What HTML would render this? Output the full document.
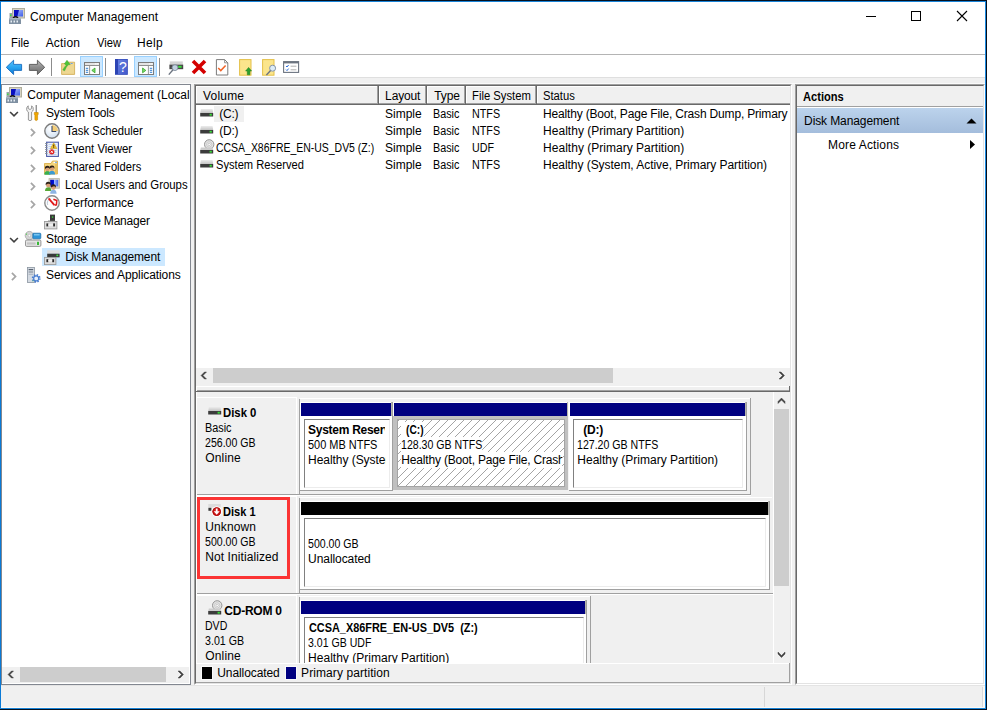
<!DOCTYPE html>
<html><head><meta charset="utf-8"><title>Computer Management</title>
<style>
html,body{margin:0;padding:0;}
body{width:987px;height:710px;overflow:hidden;background:#fff;position:relative;font-family:"Liberation Sans", sans-serif;font-size:12px;color:#000;}
body div, body span.t, body svg{position:absolute;}
.t{white-space:pre;line-height:16px;height:16px;}
</style></head><body>
<div style="left:0px;top:0px;width:987px;height:710px;background:#fff;"></div>
<div style="left:1px;top:54px;width:984px;height:1px;background:#b4b4b4;"></div>
<div style="left:1px;top:77px;width:984px;height:1px;background:#dfdfdf;"></div>
<div style="left:1px;top:78px;width:984px;height:630px;background:#f0f0f0;"></div>
<div style="left:1px;top:83px;width:984px;height:1px;background:#fafafa;"></div>
<svg style="left:9px;top:8px;overflow:visible" width="16" height="16" viewBox="0 0 16 16"><defs><linearGradient id="scr" x1="0" y1="0" x2="1" y2="0"><stop offset="0" stop-color="#0000b4"/><stop offset=".45" stop-color="#0018d8"/><stop offset=".5" stop-color="#a8bcff"/><stop offset="1" stop-color="#3c5ce8"/></linearGradient><linearGradient id="scr2" x1="0" y1="0" x2="1" y2="1"><stop offset="0" stop-color="#b8c8ff"/><stop offset="1" stop-color="#3c5ce8"/></linearGradient></defs>
<rect x="3.5" y="0.5" width="12" height="9.5" fill="#d6d3c4" stroke="#b0ae9c"/>
<rect x="5" y="2" width="9" height="6.5" fill="url(#scr2)"/><path d="M5 2 H10 L8.4 8.5 H5 Z" fill="#0a10c0"/>
<rect x="0.5" y="5" width="2.5" height="5" fill="#9aa3ab"/><rect x="1" y="6.5" width="1.5" height="1.5" fill="#3ce03c"/>
<path d="M4 10 Q6.5 7.5 9 10" stroke="#101018" stroke-width="1.4" fill="none"/>
<rect x="0" y="10" width="12" height="6" fill="#7f90a2"/><rect x="0" y="10" width="12" height="1.5" fill="#aab6c2"/>
<rect x="1.5" y="12.5" width="1.5" height="2" fill="#e8eef4"/><rect x="4.5" y="12.5" width="1.5" height="2" fill="#e8eef4"/><rect x="7.5" y="12.5" width="1.5" height="2" fill="#e8eef4"/></svg>
<span class="t" style="left:30.1px;top:9px;letter-spacing:0.106px;">Computer Management</span>
<div style="left:866px;top:16px;width:10px;height:1px;background:#000;"></div>
<div style="left:911px;top:11px;width:10px;height:10px;border:1px solid #000;box-sizing:border-box;"></div>
<svg style="left:956px;top:10px" width="12" height="12" viewBox="0 0 12 12"><path d="M1 1 L11 11 M11 1 L1 11" stroke="#000" stroke-width="1.1" fill="none"/></svg>
<span class="t" style="left:11.16px;top:35px;transform:scaleX(0.9389);transform-origin:0 0;">File</span>
<span class="t" style="left:45.7px;top:35px;letter-spacing:0.18px;">Action</span>
<span class="t" style="left:96.7px;top:35px;transform:scaleX(0.9346);transform-origin:0 0;">View</span>
<span class="t" style="left:137.1px;top:35px;letter-spacing:0.3px;">Help</span>
<svg style="left:5px;top:58px;overflow:visible" width="18" height="18" viewBox="0 0 18 18"><defs><linearGradient id="ba" x1="0" y1="0" x2="0" y2="1"><stop offset="0" stop-color="#58c4fc"/><stop offset=".5" stop-color="#2aa4f0"/><stop offset="1" stop-color="#0c78d4"/></linearGradient>
<linearGradient id="fa" x1="0" y1="0" x2="0" y2="1"><stop offset="0" stop-color="#b8b8b8"/><stop offset=".5" stop-color="#8c8c8c"/><stop offset="1" stop-color="#6c6c6c"/></linearGradient></defs>
<path d="M1.3 9.3 L8.6 2.2 V6.4 H16.6 V12.4 H8.6 V16.5 Z" fill="url(#ba)" stroke="#1a6cc0" stroke-width="0.9"/></svg>
<svg style="left:28px;top:58px;overflow:visible" width="18" height="18" viewBox="0 0 18 18"><path d="M16.7 9.3 L9.4 2.2 V6.4 H1.4 V12.4 H9.4 V16.5 Z" fill="url(#fa)" stroke="#555" stroke-width="0.9"/></svg>
<div style="left:51px;top:58px;width:1px;height:18px;background:#8c8c8c;"></div>
<svg style="left:60px;top:58px;overflow:visible" width="16" height="18" viewBox="0 0 16 18"><path d="M1.6 5.6 H6.4 L7.6 4.2 H14.6 V16.4 H1.6 Z" fill="#eed792" stroke="#cfa84c" stroke-width="0.8"/>
<path d="M2.8 12 Q4.4 8.6 6.2 7.2 L4.4 5.8 L7 2.2 L10.2 6.6 L8.2 6.8 Q6 9 4.6 12.8 Z" fill="#4cc436" stroke="#2f9a20" stroke-width="0.4"/><rect x="10.6" y="5" width="2" height="1" fill="#6aa0e8"/></svg>
<div style="left:80px;top:56px;width:23px;height:21px;background:#cce8ff;border:1px solid #99d1ff;box-sizing:border-box;"></div>
<svg style="left:84px;top:62px;overflow:visible" width="16" height="13" viewBox="0 0 16 13"><rect x="0.5" y="0.5" width="15" height="12" fill="#fdfdfd" stroke="#7c7c7c" stroke-width="1"/>
<rect x="1" y="1" width="14" height="2" fill="#e4e4e4"/><rect x="11.2" y="1.2" width="1.3" height="1.3" fill="#fff"/><rect x="13.2" y="1.2" width="1.3" height="1.3" fill="#fff"/>
<rect x="1" y="3" width="14" height="1" fill="#909090"/><rect x="5.2" y="4" width="0.9" height="8" fill="#909090"/><path d="M1.8 6.3H4.2M1.8 8.3H4.2M1.8 10.3H4.2" stroke="#2c7cd0" stroke-width="1"/><path d="M11 6 V10.8 L7.8 8.4 Z" fill="#7fd86c" stroke="#34a828" stroke-width="0.8"/></svg>
<div style="left:105px;top:58px;width:1px;height:18px;background:#8c8c8c;"></div>
<svg style="left:115px;top:59px;overflow:visible" width="14" height="16" viewBox="0 0 14 16"><defs><linearGradient id="hp" x1="0" y1="0" x2="1" y2="1"><stop offset="0" stop-color="#6880e0"/><stop offset="1" stop-color="#4058cc"/></linearGradient></defs>
<rect x="0" y="0" width="12.8" height="15.8" fill="#2c44b4"/><rect x="3" y="0.6" width="9.2" height="14.6" fill="url(#hp)"/>
<text x="7.8" y="12.8" font-family="Liberation Sans, sans-serif" font-size="14" fill="#fff" text-anchor="middle">?</text></svg>
<div style="left:134px;top:56px;width:23px;height:21px;background:#cce8ff;border:1px solid #99d1ff;box-sizing:border-box;"></div>
<svg style="left:138px;top:62px;overflow:visible" width="16" height="13" viewBox="0 0 16 13"><rect x="0.5" y="0.5" width="15" height="12" fill="#fdfdfd" stroke="#7c7c7c" stroke-width="1"/>
<rect x="1" y="1" width="14" height="2" fill="#e4e4e4"/><rect x="11.2" y="1.2" width="1.3" height="1.3" fill="#fff"/><rect x="13.2" y="1.2" width="1.3" height="1.3" fill="#fff"/>
<rect x="1" y="3" width="14" height="1" fill="#909090"/><rect x="9.9" y="4" width="0.9" height="8" fill="#909090"/><path d="M11.8 6.3H14.2M11.8 8.3H14.2M11.8 10.3H14.2" stroke="#2c7cd0" stroke-width="1"/><path d="M4.6 6 V10.8 L7.8 8.4 Z" fill="#7fd86c" stroke="#34a828" stroke-width="0.8"/></svg>
<div style="left:159px;top:58px;width:1px;height:18px;background:#8c8c8c;"></div>
<svg style="left:167px;top:60px;overflow:visible" width="17" height="16" viewBox="0 0 17 16"><rect x="2.8" y="1.4" width="13" height="3.2" fill="#d4d4d4"/><rect x="2.4" y="4.6" width="13.8" height="4.6" fill="#484848"/><rect x="11.2" y="5.8" width="3.4" height="2" fill="#38e038"/>
<circle cx="8" cy="7.6" r="2.9" fill="#cfe0f2" fill-opacity=".9" stroke="#8490a0" stroke-width="1"/><path d="M6 9.8 L1.8 14.6" stroke="#6c7480" stroke-width="1.4"/></svg>
<svg style="left:191px;top:59px;overflow:visible" width="16" height="16" viewBox="0 0 16 16"><path d="M2 2 L14 14 M14 2 L2 14" stroke="#d40000" stroke-width="3.6" stroke-linecap="butt"/></svg>
<svg style="left:215px;top:59px;overflow:visible" width="14" height="17" viewBox="0 0 14 17"><path d="M1.4 0.6 H9.6 L12.8 3.8 V16 H1.4 Z" fill="#fff" stroke="#7c7c7c" stroke-width="1"/><path d="M9.6 0.6 V3.8 H12.8" fill="none" stroke="#7c7c7c" stroke-width="0.8"/>
<path d="M3.2 9 L5.8 11.6 L10.6 6.4" stroke="#f06428" stroke-width="1.5" fill="none"/></svg>
<svg style="left:239px;top:59px;overflow:visible" width="15" height="17" viewBox="0 0 15 17"><rect x="0.6" y="0.6" width="11.4" height="15.6" fill="#fbe58c" stroke="#e4c048" stroke-width="1"/>
<path d="M9.6 8.4 L12.6 12 H10.9 V15.8 H8.3 V12 H6.6 Z" fill="#2ca02c" stroke="#1c7c1c" stroke-width="0.5"/></svg>
<svg style="left:262px;top:59px;overflow:visible" width="16" height="17" viewBox="0 0 16 17"><rect x="0.6" y="0.6" width="11.4" height="15.6" fill="#fbe58c" stroke="#e4c048" stroke-width="1"/>
<circle cx="10.6" cy="9.2" r="3" fill="#dcecf8" stroke="#8494a8" stroke-width="1"/><path d="M8.6 11.6 L4.4 16" stroke="#6c7480" stroke-width="1.4"/></svg>
<svg style="left:283px;top:61px;overflow:visible" width="17" height="13" viewBox="0 0 17 13"><rect x="0.6" y="0.6" width="15" height="10.8" fill="#fff" stroke="#6c7480" stroke-width="1.1"/><rect x="1" y="1" width="14.6" height="1.4" fill="#6c7480"/>
<path d="M3 5 L4 6 L5.6 4 M3 8.6 L4 9.6 L5.6 7.6" stroke="#2c6cd8" stroke-width="1" fill="none"/><path d="M7.6 5.2 H13.4 M7.6 8.8 H13.4" stroke="#b0b0b0" stroke-width="1"/></svg>
<div style="left:1px;top:84px;width:190px;height:601px;background:#fff;border:1px solid #828790;box-sizing:border-box;"></div>
<svg style="left:6px;top:87px;overflow:visible" width="16" height="16" viewBox="0 0 16 16"><defs><linearGradient id="scr" x1="0" y1="0" x2="1" y2="0"><stop offset="0" stop-color="#0000b4"/><stop offset=".45" stop-color="#0018d8"/><stop offset=".5" stop-color="#a8bcff"/><stop offset="1" stop-color="#3c5ce8"/></linearGradient><linearGradient id="scr2" x1="0" y1="0" x2="1" y2="1"><stop offset="0" stop-color="#b8c8ff"/><stop offset="1" stop-color="#3c5ce8"/></linearGradient></defs>
<rect x="3.5" y="0.5" width="12" height="9.5" fill="#d6d3c4" stroke="#b0ae9c"/>
<rect x="5" y="2" width="9" height="6.5" fill="url(#scr2)"/><path d="M5 2 H10 L8.4 8.5 H5 Z" fill="#0a10c0"/>
<rect x="0.5" y="5" width="2.5" height="5" fill="#9aa3ab"/><rect x="1" y="6.5" width="1.5" height="1.5" fill="#3ce03c"/>
<path d="M4 10 Q6.5 7.5 9 10" stroke="#101018" stroke-width="1.4" fill="none"/>
<rect x="0" y="10" width="12" height="6" fill="#7f90a2"/><rect x="0" y="10" width="12" height="1.5" fill="#aab6c2"/>
<rect x="1.5" y="12.5" width="1.5" height="2" fill="#e8eef4"/><rect x="4.5" y="12.5" width="1.5" height="2" fill="#e8eef4"/><rect x="7.5" y="12.5" width="1.5" height="2" fill="#e8eef4"/></svg>
<span class="t" style="left:27.3px;top:87px;letter-spacing:0.012px;">Computer Management (Local</span>
<svg style="left:25px;top:105px;overflow:visible" width="16" height="16" viewBox="0 0 16 16"><path d="M3.2 0.8 L3.2 3.5 L5 4.5 L6.6 3.5 L6.6 0.8 Q8.6 2 8.3 4.6 Q8 6.2 6.6 7 L6.6 15 Q5 16.4 3.4 15 L3.4 7 Q1.8 6.2 1.6 4.4 Q1.5 2 3.2 0.8 Z" fill="#f2f2f2" stroke="#8c8c8c" stroke-width="0.9"/>
<rect x="10.6" y="0" width="1.3" height="8" fill="#8a8a8a"/>
<path d="M9.3 7.5 H13.2 V9.5 H12.6 V14.8 Q11.2 16.4 9.9 14.8 V9.5 H9.3 Z" fill="#f0a800" stroke="#c88400" stroke-width="0.6"/></svg>
<svg style="left:8.6px;top:110.6px;overflow:visible" width="10" height="7" viewBox="0 0 10 7"><path d="M1.1 1 L5 4.9 L8.9 1" stroke="#404040" stroke-width="1.6" fill="none"/></svg>
<span class="t" style="left:46.1px;top:105px;letter-spacing:-0.227px;">System Tools</span>
<svg style="left:44px;top:123px;overflow:visible" width="16" height="16" viewBox="0 0 16 16"><defs><radialGradient id="clk" cx=".4" cy=".35" r=".7"><stop offset="0" stop-color="#ffffff"/><stop offset="1" stop-color="#cfdff0"/></radialGradient></defs>
<circle cx="8" cy="8" r="7.2" fill="url(#clk)" stroke="#7c7c7c" stroke-width="1.4"/>
<path d="M8 8 L8 2 A6 6 0 0 1 14 8 Z" fill="#f2cc78"/>
<path d="M8 3 V8.5 H12.2" stroke="#3c4c6c" stroke-width="1.1" fill="none"/></svg>
<svg style="left:29.7px;top:127.9px;overflow:visible" width="7" height="10" viewBox="0 0 7 10"><path d="M0.9 0.9 L4.55 4.55 L0.9 8.2" stroke="#a6a6a6" stroke-width="1.7" fill="none"/></svg>
<span class="t" style="left:66.3px;top:123px;transform:scaleX(0.9354);transform-origin:0 0;">Task Scheduler</span>
<svg style="left:44px;top:141px;overflow:visible" width="16" height="16" viewBox="0 0 16 16"><rect x="2.6" y="1.2" width="11.8" height="14.2" fill="#eef3fc" stroke="#4c5caa" stroke-width="1.1"/>
<path d="M4.5 3.5H12.5M4.5 5.5H12.5M4.5 7.5H12.5M4.5 9.5H12.5M4.5 11.5H12.5M4.5 13.5H12.5" stroke="#b4c8ec" stroke-width="0.8"/>
<path d="M1.2 2.5H3.4M1.2 4.5H3.4M1.2 6.5H3.4M1.2 8.5H3.4M1.2 10.5H3.4M1.2 12.5H3.4" stroke="#808890" stroke-width="1"/>
<path d="M9.7 1.8 L12.9 7.6 H6.5 Z" fill="#f4c430" stroke="#c89600" stroke-width="0.5"/><rect x="9.3" y="3.6" width="0.9" height="2.2" fill="#302000"/><rect x="9.3" y="6.2" width="0.9" height="0.8" fill="#302000"/>
<circle cx="7.8" cy="10.8" r="2.6" fill="#e02020"/><path d="M6.7 9.7 L8.9 11.9 M8.9 9.7 L6.7 11.9" stroke="#fff" stroke-width="0.9"/></svg>
<svg style="left:29.7px;top:145.9px;overflow:visible" width="7" height="10" viewBox="0 0 7 10"><path d="M0.9 0.9 L4.55 4.55 L0.9 8.2" stroke="#a6a6a6" stroke-width="1.7" fill="none"/></svg>
<span class="t" style="left:65.35px;top:141px;transform:scaleX(0.9522);transform-origin:0 0;">Event Viewer</span>
<svg style="left:44px;top:160px;overflow:visible" width="16" height="16" viewBox="0 0 16 16"><path d="M0.5 3.5 H7 L8.5 1 H13.5 V14 H0.5 Z" fill="#f4d47c" stroke="#d8a840" stroke-width="0.8"/>
<rect x="9.5" y="1.8" width="3.2" height="1.3" fill="#ffffff"/><rect x="11.3" y="1.8" width="1.4" height="1.3" fill="#4a90e0"/>
<rect x="11" y="4" width="2.5" height="10" fill="#e8c060"/><g transform="translate(3.4,8.6) scale(0.95)"><path d="M-3.2 6.5 Q-3.2 2.6 0 2.6 Q3.2 2.6 3.2 6.5 Z" fill="#38b050"/><circle cx="0" cy="0.4" r="2.3" fill="#d8a078"/><path d="M-2.5 0.6 Q-3 -2.9 0 -2.9 Q3 -2.9 2.5 0.6 Q1.6 -1.2 -0.2 -0.8 Q-1.8 -0.6 -2.5 0.6Z" fill="#2c2018"/></g><g transform="translate(8,8.2) scale(0.95)"><path d="M-3.2 6.5 Q-3.2 2.6 0 2.6 Q3.2 2.6 3.2 6.5 Z" fill="#3c9ad0"/><circle cx="0" cy="0.4" r="2.3" fill="#d8a078"/><path d="M-2.5 0.6 Q-3 -2.9 0 -2.9 Q3 -2.9 2.5 0.6 Q1.6 -1.2 -0.2 -0.8 Q-1.8 -0.6 -2.5 0.6Z" fill="#2c2018"/></g></svg>
<svg style="left:29.7px;top:163.9px;overflow:visible" width="7" height="10" viewBox="0 0 7 10"><path d="M0.9 0.9 L4.55 4.55 L0.9 8.2" stroke="#a6a6a6" stroke-width="1.7" fill="none"/></svg>
<span class="t" style="left:65.37px;top:159px;transform:scaleX(0.9296);transform-origin:0 0;">Shared Folders</span>
<svg style="left:44px;top:178px;overflow:visible" width="16" height="16" viewBox="0 0 16 16"><rect x="5" y="0.6" width="10.4" height="9.6" fill="#d8d5c8" stroke="#b8b5a4" stroke-width="0.8"/>
<rect x="6.2" y="1.8" width="8" height="6.6" fill="url(#scr)"/><g transform="translate(4.2,6.6) scale(1.0)"><path d="M-3.2 6.5 Q-3.2 2.6 0 2.6 Q3.2 2.6 3.2 6.5 Z" fill="#58a838"/><circle cx="0" cy="0.4" r="2.3" fill="#d8a078"/><path d="M-2.5 0.6 Q-3 -2.9 0 -2.9 Q3 -2.9 2.5 0.6 Q1.6 -1.2 -0.2 -0.8 Q-1.8 -0.6 -2.5 0.6Z" fill="#2c2018"/></g><g transform="translate(9.4,9.2) scale(1.0)"><path d="M-3.2 6.5 Q-3.2 2.6 0 2.6 Q3.2 2.6 3.2 6.5 Z" fill="#8cb4e4"/><circle cx="0" cy="0.4" r="2.3" fill="#d8a078"/><path d="M-2.5 0.6 Q-3 -2.9 0 -2.9 Q3 -2.9 2.5 0.6 Q1.6 -1.2 -0.2 -0.8 Q-1.8 -0.6 -2.5 0.6Z" fill="#2c2018"/></g></svg>
<svg style="left:29.7px;top:181.9px;overflow:visible" width="7" height="10" viewBox="0 0 7 10"><path d="M0.9 0.9 L4.55 4.55 L0.9 8.2" stroke="#a6a6a6" stroke-width="1.7" fill="none"/></svg>
<span class="t" style="left:65.35px;top:177px;transform:scaleX(0.9477);transform-origin:0 0;">Local Users and Groups</span>
<svg style="left:44px;top:195px;overflow:visible" width="16" height="16" viewBox="0 0 16 16"><circle cx="8" cy="8" r="7.2" fill="#fdfdfd" stroke="#8a8a8a" stroke-width="1.4"/>
<path d="M3.6 9.5 A4.6 4.6 0 0 1 6.2 3.8" stroke="#7a96b4" stroke-width="1" fill="none" stroke-dasharray="1 1"/>
<path d="M4.6 3.4 L10.4 10.2" stroke="#e01818" stroke-width="1.8"/>
<path d="M9.4 4.2 L12.8 5.6 L12.4 9.8 L10.6 10.2" stroke="#e01818" stroke-width="1.5" fill="none"/></svg>
<svg style="left:29.7px;top:199.9px;overflow:visible" width="7" height="10" viewBox="0 0 7 10"><path d="M0.9 0.9 L4.55 4.55 L0.9 8.2" stroke="#a6a6a6" stroke-width="1.7" fill="none"/></svg>
<span class="t" style="left:65.3px;top:195px;letter-spacing:-0.03px;">Performance</span>
<svg style="left:44px;top:214px;overflow:visible" width="16" height="16" viewBox="0 0 16 16"><rect x="6" y="0.6" width="5" height="6.8" fill="#3a3a3a"/><rect x="7.9" y="2.4" width="1.3" height="1.3" fill="#40e040"/>
<rect x="4" y="6.6" width="7" height="1" fill="#6a6a6a"/>
<rect x="0.5" y="7.5" width="12.4" height="7.4" fill="#dcdcdc" stroke="#9a9a9a" stroke-width="0.9"/>
<rect x="2.4" y="9.4" width="1.9" height="3" fill="#2c2c2c"/><rect x="9.1" y="9.4" width="1.9" height="3" fill="#2c2c2c"/>
<rect x="4.3" y="10.3" width="4.8" height="1.4" fill="#f6f6f6"/></svg>
<span class="t" style="left:65.3px;top:213px;letter-spacing:-0.208px;">Device Manager</span>
<svg style="left:25px;top:231px;overflow:visible" width="16" height="16" viewBox="0 0 16 16"><circle cx="4.4" cy="4.6" r="4.2" fill="#d4d4d4" stroke="#9c9c9c" stroke-width="0.7"/><circle cx="4.4" cy="4.6" r="1.3" fill="#f8f8f8" stroke="#a8a8a8" stroke-width="0.5"/><rect x="1" y="2.6" width="1.1" height="1.1" fill="#40d040"/>
<rect x="7.8" y="2.2" width="8" height="5.6" rx="0.8" fill="#2c94d8" stroke="#1a6aa8" stroke-width="0.7"/><rect x="9" y="3.2" width="5.6" height="1.2" fill="#8cd0f4"/>
<rect x="0.5" y="9" width="15.4" height="6.4" rx="1.2" fill="#e4e4e4" stroke="#8c8c8c" stroke-width="0.9"/>
<rect x="2" y="11.4" width="8.6" height="2.2" fill="#c4c4c4"/><rect x="12" y="10.8" width="2" height="3.2" fill="#38b838"/></svg>
<svg style="left:8.6px;top:236.6px;overflow:visible" width="10" height="7" viewBox="0 0 10 7"><path d="M1.1 1 L5 4.9 L8.9 1" stroke="#404040" stroke-width="1.6" fill="none"/></svg>
<span class="t" style="left:46.1px;top:231px;letter-spacing:-0.183px;">Storage</span>
<div style="left:42px;top:248px;width:123px;height:18px;background:#cce8ff;"></div>
<svg style="left:44px;top:250px;overflow:visible" width="16" height="16" viewBox="0 0 16 16"><rect x="3.2" y="0.3" width="12.4" height="3.4" fill="#dedede"/><rect x="3.2" y="3.7" width="12.4" height="3.6" fill="#383838"/><rect x="12.4" y="4.6" width="1.8" height="1.6" fill="#40e040"/>
<rect x="0.5" y="7.4" width="11.4" height="7.2" fill="#dcdcdc" stroke="#9a9a9a" stroke-width="0.9"/>
<rect x="2.4" y="9.2" width="1.9" height="3" fill="#2c2c2c"/><rect x="8.2" y="9.2" width="1.9" height="3" fill="#2c2c2c"/><rect x="4.3" y="10.1" width="3.9" height="1.3" fill="#f6f6f6"/></svg>
<span class="t" style="left:65.3px;top:249px;letter-spacing:-0.121px;">Disk Management</span>
<svg style="left:25px;top:267px;overflow:visible" width="16" height="16" viewBox="0 0 16 16"><rect x="2.4" y="0.5" width="7" height="15" fill="#d4dae2" stroke="#8a94a0" stroke-width="0.8"/>
<rect x="3.6" y="2" width="4.6" height="1.2" fill="#5a6472"/><rect x="3.6" y="4.4" width="4.6" height="1.2" fill="#8a94a0"/><rect x="3.6" y="6.8" width="4.6" height="1" fill="#aab2be"/><rect x="7.4" y="13" width="1.2" height="1.2" fill="#40d040"/>
<circle cx="11.2" cy="11.4" r="3.3" fill="none" stroke="#4a7ed0" stroke-width="2.2" stroke-dasharray="1.3 1.3"/><circle cx="11.2" cy="11.4" r="2.5" fill="#e8f0fc" stroke="#4a7ed0" stroke-width="1.2"/></svg>
<svg style="left:10.9px;top:271.9px;overflow:visible" width="7" height="10" viewBox="0 0 7 10"><path d="M0.9 0.9 L4.55 4.55 L0.9 8.2" stroke="#a6a6a6" stroke-width="1.7" fill="none"/></svg>
<span class="t" style="left:46.1px;top:267px;letter-spacing:-0.087px;">Services and Applications</span>
<div style="left:2px;top:667px;width:187px;height:16px;background:#f0f0f0;"></div>
<div style="left:20px;top:667px;width:146px;height:15px;background:#cdcdcd;"></div>
<svg style="left:8.3px;top:671.2px;overflow:visible" width="6" height="7" viewBox="0 0 6 7"><path d="M3.5 0 H5.5 L2 3.5 L5.5 7 H3.5 L0 3.5 Z" fill="#404040" stroke="#404040" stroke-width="0.45"/></svg>
<svg style="left:178.2px;top:671.2px;overflow:visible" width="6" height="7" viewBox="0 0 6 7"><path d="M0 0 H2 L5.5 3.5 L2 7 H0 L3.5 3.5 Z" fill="#404040" stroke="#404040" stroke-width="0.45"/></svg>
<div style="left:194px;top:84px;width:598px;height:601px;background:#fff;box-sizing:border-box;border-style:solid;border-width:1px;border-color:#a0a0a0 #fff #fff #a0a0a0;"></div>
<div style="left:195px;top:85px;width:596px;height:599px;box-sizing:border-box;border-style:solid;border-width:1px;border-color:#696969 #e3e3e3 #e3e3e3 #696969;"></div>
<div style="left:196px;top:86px;width:183px;height:19px;background:#f0f0f0;"></div>
<div style="left:196px;top:86px;width:183px;height:1px;background:#fff;"></div>
<div style="left:196px;top:86px;width:1px;height:17px;background:#fff;"></div>
<div style="left:196px;top:103px;width:183px;height:1px;background:#a0a0a0;"></div>
<div style="left:196px;top:104px;width:183px;height:1px;background:#696969;"></div>
<div style="left:377px;top:86px;width:1px;height:18px;background:#a0a0a0;"></div>
<div style="left:378px;top:86px;width:1px;height:19px;background:#696969;"></div>
<div style="left:379px;top:86px;width:48px;height:19px;background:#f0f0f0;"></div>
<div style="left:379px;top:86px;width:48px;height:1px;background:#fff;"></div>
<div style="left:379px;top:86px;width:1px;height:17px;background:#fff;"></div>
<div style="left:379px;top:103px;width:48px;height:1px;background:#a0a0a0;"></div>
<div style="left:379px;top:104px;width:48px;height:1px;background:#696969;"></div>
<div style="left:425px;top:86px;width:1px;height:18px;background:#a0a0a0;"></div>
<div style="left:426px;top:86px;width:1px;height:19px;background:#696969;"></div>
<div style="left:427px;top:86px;width:39px;height:19px;background:#f0f0f0;"></div>
<div style="left:427px;top:86px;width:39px;height:1px;background:#fff;"></div>
<div style="left:427px;top:86px;width:1px;height:17px;background:#fff;"></div>
<div style="left:427px;top:103px;width:39px;height:1px;background:#a0a0a0;"></div>
<div style="left:427px;top:104px;width:39px;height:1px;background:#696969;"></div>
<div style="left:464px;top:86px;width:1px;height:18px;background:#a0a0a0;"></div>
<div style="left:465px;top:86px;width:1px;height:19px;background:#696969;"></div>
<div style="left:466px;top:86px;width:71px;height:19px;background:#f0f0f0;"></div>
<div style="left:466px;top:86px;width:71px;height:1px;background:#fff;"></div>
<div style="left:466px;top:86px;width:1px;height:17px;background:#fff;"></div>
<div style="left:466px;top:103px;width:71px;height:1px;background:#a0a0a0;"></div>
<div style="left:466px;top:104px;width:71px;height:1px;background:#696969;"></div>
<div style="left:535px;top:86px;width:1px;height:18px;background:#a0a0a0;"></div>
<div style="left:536px;top:86px;width:1px;height:19px;background:#696969;"></div>
<div style="left:537px;top:86px;width:253px;height:19px;background:#f0f0f0;"></div>
<div style="left:537px;top:86px;width:253px;height:1px;background:#fff;"></div>
<div style="left:537px;top:86px;width:1px;height:17px;background:#fff;"></div>
<div style="left:537px;top:103px;width:253px;height:1px;background:#a0a0a0;"></div>
<div style="left:537px;top:104px;width:253px;height:1px;background:#696969;"></div>
<span class="t" style="left:203.1px;top:88px;letter-spacing:0.18px;">Volume</span>
<span class="t" style="left:385.1px;top:88px;letter-spacing:-0.14px;">Layout</span>
<span class="t" style="left:434.3px;top:88px;letter-spacing:-0.1px;">Type</span>
<span class="t" style="left:472.16px;top:88px;transform:scaleX(0.9393);transform-origin:0 0;">File System</span>
<span class="t" style="left:543.16px;top:88px;transform:scaleX(0.9364);transform-origin:0 0;">Status</span>
<div style="left:214px;top:106px;width:30px;height:16px;background:#f0f0f0;"></div>
<svg style="left:199.5px;top:109px;overflow:visible" width="14" height="8" viewBox="0 0 14 8"><defs><linearGradient id="dt" x1="0" y1="0" x2="0" y2="1"><stop offset="0" stop-color="#ececec"/><stop offset="1" stop-color="#c4c4c4"/></linearGradient></defs>
<path d="M0.9 0 H12.5 L13.2 4 H0.2 Z" fill="url(#dt)"/><rect x="0.2" y="4" width="13" height="3.5" fill="#3c3c3c"/><rect x="9.6" y="4.8" width="2.2" height="1.8" fill="#38e038"/></svg>
<span class="t" style="left:219.3px;top:106px;letter-spacing:-0.233px;">(C:)</span>
<span class="t" style="left:385.1px;top:106px;letter-spacing:-0.02px;">Simple</span>
<span class="t" style="left:433.4px;top:106px;transform:scaleX(0.8964);transform-origin:0 0;">Basic</span>
<span class="t" style="left:472.2px;top:106px;transform:scaleX(0.8967);transform-origin:0 0;">NTFS</span>
<span class="t" style="left:543.1px;top:106px;letter-spacing:-0.175px;width:246.5px;overflow:hidden;">Healthy (Boot, Page File, Crash Dump, Primary Partition)</span>
<svg style="left:199.5px;top:126px;overflow:visible" width="14" height="8" viewBox="0 0 14 8"><defs><linearGradient id="dt" x1="0" y1="0" x2="0" y2="1"><stop offset="0" stop-color="#ececec"/><stop offset="1" stop-color="#c4c4c4"/></linearGradient></defs>
<path d="M0.9 0 H12.5 L13.2 4 H0.2 Z" fill="url(#dt)"/><rect x="0.2" y="4" width="13" height="3.5" fill="#3c3c3c"/><rect x="9.6" y="4.8" width="2.2" height="1.8" fill="#38e038"/></svg>
<span class="t" style="left:219.3px;top:123px;letter-spacing:-0.233px;">(D:)</span>
<span class="t" style="left:385.1px;top:123px;letter-spacing:-0.02px;">Simple</span>
<span class="t" style="left:433.4px;top:123px;transform:scaleX(0.8964);transform-origin:0 0;">Basic</span>
<span class="t" style="left:472.2px;top:123px;transform:scaleX(0.8967);transform-origin:0 0;">NTFS</span>
<span class="t" style="left:543.1px;top:123px;letter-spacing:0.019px;">Healthy (Primary Partition)</span>
<svg style="left:199.5px;top:138.7px;overflow:visible" width="15" height="15" viewBox="0 0 15 15"><circle cx="9.2" cy="5.4" r="4.7" fill="#e2e2e2" stroke="#8c8c8c" stroke-width="0.9"/><circle cx="9.2" cy="5.4" r="2.6" fill="#f4f4f4" stroke="#b4b4b4" stroke-width="0.6"/><circle cx="9.2" cy="5.4" r="1.2" fill="#fff" stroke="#9a9a9a" stroke-width="0.5"/>
<path d="M0.9 8.4 H12.5 L13.2 11 H0.2 Z" fill="#cccccc"/><rect x="0.2" y="11" width="13" height="3.5" fill="#3c3c3c"/><rect x="9.6" y="11.8" width="2.2" height="1.8" fill="#38e038"/></svg>
<span class="t" style="left:216.23px;top:140px;transform:scaleX(0.8717);transform-origin:0 0;">CCSA_X86FRE_EN-US_DV5 (Z:)</span>
<span class="t" style="left:385.1px;top:140px;letter-spacing:-0.02px;">Simple</span>
<span class="t" style="left:433.4px;top:140px;transform:scaleX(0.8964);transform-origin:0 0;">Basic</span>
<span class="t" style="left:472.21px;top:140px;transform:scaleX(0.8913);transform-origin:0 0;">UDF</span>
<span class="t" style="left:543.1px;top:140px;letter-spacing:0.019px;">Healthy (Primary Partition)</span>
<svg style="left:199.5px;top:160px;overflow:visible" width="14" height="8" viewBox="0 0 14 8"><defs><linearGradient id="dt" x1="0" y1="0" x2="0" y2="1"><stop offset="0" stop-color="#ececec"/><stop offset="1" stop-color="#c4c4c4"/></linearGradient></defs>
<path d="M0.9 0 H12.5 L13.2 4 H0.2 Z" fill="url(#dt)"/><rect x="0.2" y="4" width="13" height="3.5" fill="#3c3c3c"/><rect x="9.6" y="4.8" width="2.2" height="1.8" fill="#38e038"/></svg>
<span class="t" style="left:216.17px;top:157px;transform:scaleX(0.928);transform-origin:0 0;">System Reserved</span>
<span class="t" style="left:385.1px;top:157px;letter-spacing:-0.02px;">Simple</span>
<span class="t" style="left:433.4px;top:157px;transform:scaleX(0.8964);transform-origin:0 0;">Basic</span>
<span class="t" style="left:472.2px;top:157px;transform:scaleX(0.8967);transform-origin:0 0;">NTFS</span>
<span class="t" style="left:543.1px;top:157px;letter-spacing:-0.05px;">Healthy (System, Active, Primary Partition)</span>
<div style="left:196px;top:368px;width:594px;height:18px;background:#f0f0f0;"></div>
<div style="left:213px;top:368px;width:400px;height:15px;background:#cdcdcd;"></div>
<svg style="left:201.3px;top:372px;overflow:visible" width="6" height="7" viewBox="0 0 6 7"><path d="M3.5 0 H5.5 L2 3.5 L5.5 7 H3.5 L0 3.5 Z" fill="#404040" stroke="#404040" stroke-width="0.45"/></svg>
<svg style="left:779.2px;top:372px;overflow:visible" width="6" height="7" viewBox="0 0 6 7"><path d="M0 0 H2 L5.5 3.5 L2 7 H0 L3.5 3.5 Z" fill="#404040" stroke="#404040" stroke-width="0.45"/></svg>
<div style="left:196px;top:386px;width:594px;height:1px;background:#fff;"></div>
<div style="left:197px;top:387px;width:593px;height:3px;background:#f0f0f0;"></div>
<div style="left:197px;top:390px;width:592px;height:1px;background:#a0a0a0;"></div>
<div style="left:196px;top:391px;width:594px;height:1px;background:#696969;"></div>
<div style="left:789px;top:386px;width:1px;height:5px;background:#696969;"></div>
<div style="left:196px;top:386px;width:1px;height:5px;background:#fff;"></div>
<div style="left:196px;top:392px;width:594px;height:271px;background:#f0f0f0;"></div>
<div style="left:196px;top:392px;width:1px;height:271px;background:#fff;"></div>
<div style="left:773px;top:392px;width:1px;height:271px;background:#fff;"></div>
<div style="left:196px;top:392px;width:577px;height:271px;overflow:hidden">
<div style="left:1px;top:5px;width:100px;height:1px;background:#fff;"></div>
<div style="left:100px;top:5px;width:1px;height:97px;background:#fff;"></div>
<div style="left:103px;top:7px;width:1px;height:95px;background:#a0a0a0;"></div>
<div style="left:104px;top:6px;width:450px;height:1px;background:#fff;"></div>
<div style="left:1px;top:102px;width:554px;height:1px;background:#a0a0a0;"></div>
<div style="left:1px;top:103px;width:554px;height:1px;background:#fff;"></div>
<div style="left:554px;top:6px;width:1px;height:97px;background:#a0a0a0;"></div>
<svg style="left:11.5px;top:15px;overflow:visible" width="14" height="8" viewBox="0 0 14 8"><defs><linearGradient id="dt" x1="0" y1="0" x2="0" y2="1"><stop offset="0" stop-color="#ececec"/><stop offset="1" stop-color="#c4c4c4"/></linearGradient></defs>
<path d="M0.9 0 H12.5 L13.2 4 H0.2 Z" fill="url(#dt)"/><rect x="0.2" y="4" width="13" height="3.5" fill="#3c3c3c"/><rect x="9.6" y="4.8" width="2.2" height="1.8" fill="#38e038"/></svg>
<span class="t" style="left:27.36px;top:13px;transform:scaleX(0.9441);transform-origin:0 0;font-weight:bold;">Disk 0</span>
<span class="t" style="left:9.4px;top:28px;transform:scaleX(0.9036);transform-origin:0 0;">Basic</span>
<span class="t" style="left:9.42px;top:43px;transform:scaleX(0.8804);transform-origin:0 0;">256.00 GB</span>
<span class="t" style="left:9.3px;top:58px;letter-spacing:0.14px;">Online</span>
<div style="left:104px;top:10px;width:92px;height:88px;background:#fff;"></div>
<div style="left:105px;top:11px;width:90px;height:13px;background:#000080;"></div>
<div style="left:195px;top:10px;width:1px;height:14px;background:#b4b4ac;"></div>
<div style="left:196px;top:10px;width:1px;height:89px;background:#a0a0a0;"></div>
<div style="left:104px;top:98px;width:93px;height:1px;background:#a0a0a0;"></div>
<div style="left:108px;top:27px;width:86px;height:69px;box-sizing:border-box;border-style:solid;border-width:1px;border-color:#808080 #ececec #ececec #808080;"></div>
<span class="t" style="left:112.1px;top:30px;letter-spacing:-0.282px;font-weight:bold;width:76.8px;overflow:hidden;">System Reserved</span>
<span class="t" style="left:112.19px;top:45px;transform:scaleX(0.9133);transform-origin:0 0;">500 MB NTFS</span>
<span class="t" style="left:112.1px;top:60px;letter-spacing:-0.05px;width:77.6px;overflow:hidden;">Healthy (System, Active, Primary Partition)</span>
<div style="left:197px;top:10px;width:175px;height:88px;background:#fff;"></div>
<div style="left:198px;top:11px;width:173px;height:13px;background:#000080;"></div>
<div style="left:371px;top:10px;width:1px;height:14px;background:#b4b4ac;"></div>
<div style="left:372px;top:10px;width:1px;height:88px;background:#f4f4f4;"></div>
<div style="left:197px;top:24px;width:175px;height:74px;box-sizing:border-box;border:3px solid #c0c0c0;border-left-width:4px;background:#fff repeating-linear-gradient(135deg,transparent 0,transparent 2.121px,#a4a4a4 2.121px,#a4a4a4 2.828px,transparent 2.828px,transparent 5.657px);"></div>
<div style="left:201px;top:27px;width:168px;height:68px;box-sizing:border-box;border:1px solid #a4a4a4;"></div>
<span class="t" style="left:211.45px;top:30px;transform:scaleX(0.8474);transform-origin:0 0;background:#fff;padding-left:6px;margin-left:-6px;font-weight:bold;">(C:)</span>
<span class="t" style="left:205.42px;top:45px;transform:scaleX(0.8824);transform-origin:0 0;background:#fff;">128.30 GB NTFS</span>
<span class="t" style="left:205.3px;top:60px;letter-spacing:-0.175px;background:#fff;width:160.5px;overflow:hidden;">Healthy (Boot, Page File, Crash Dump, Primary Partition)</span>
<div style="left:373px;top:10px;width:177px;height:88px;background:#fff;"></div>
<div style="left:374px;top:11px;width:175px;height:13px;background:#000080;"></div>
<div style="left:549px;top:10px;width:1px;height:14px;background:#b4b4ac;"></div>
<div style="left:550px;top:10px;width:1px;height:89px;background:#a0a0a0;"></div>
<div style="left:373px;top:98px;width:178px;height:1px;background:#a0a0a0;"></div>
<div style="left:377px;top:27px;width:170px;height:69px;box-sizing:border-box;border-style:solid;border-width:1px;border-color:#808080 #ececec #ececec #808080;"></div>
<span class="t" style="left:387.3px;top:30px;letter-spacing:-0.233px;font-weight:bold;">(D:)</span>
<span class="t" style="left:381.42px;top:45px;transform:scaleX(0.8824);transform-origin:0 0;">127.20 GB NTFS</span>
<span class="t" style="left:381.3px;top:60px;letter-spacing:0.004px;">Healthy (Primary Partition)</span>
<div style="left:1px;top:104px;width:100px;height:1px;background:#fff;"></div>
<div style="left:100px;top:104px;width:1px;height:97px;background:#fff;"></div>
<div style="left:103px;top:106px;width:1px;height:95px;background:#a0a0a0;"></div>
<div style="left:104px;top:105px;width:472px;height:1px;background:#fff;"></div>
<div style="left:1px;top:201px;width:576px;height:1px;background:#a0a0a0;"></div>
<div style="left:1px;top:202px;width:576px;height:1px;background:#fff;"></div>
<svg style="left:11.5px;top:112px;overflow:visible" width="15" height="14" viewBox="0 0 15 14"><rect x="0.3" y="0" width="12.4" height="3.6" fill="#dcdcdc"/><rect x="0.4" y="3.8" width="3" height="3" fill="#3c3c3c"/>
<circle cx="8.7" cy="7.6" r="5.3" fill="#fff"/><circle cx="8.7" cy="7.6" r="4.3" fill="#d41818"/><circle cx="8.7" cy="7.6" r="3.8" fill="none" stroke="#a80c0c" stroke-width="0.9"/>
<path d="M7.8 4.5 H9.6 V7.2 H11.7 L8.7 10.8 L5.7 7.2 H7.8 Z" fill="#fff"/></svg>
<span class="t" style="left:27.38px;top:112px;transform:scaleX(0.9206);transform-origin:0 0;font-weight:bold;">Disk 1</span>
<span class="t" style="left:9.3px;top:127px;letter-spacing:0.117px;">Unknown</span>
<span class="t" style="left:9.42px;top:142px;transform:scaleX(0.8804);transform-origin:0 0;">500.00 GB</span>
<span class="t" style="left:9.3px;top:157px;letter-spacing:0.079px;">Not Initialized</span>
<div style="left:104px;top:109px;width:469px;height:88px;background:#fff;"></div>
<div style="left:105px;top:110px;width:467px;height:13px;background:#000;"></div>
<div style="left:572px;top:109px;width:1px;height:14px;background:#b4b4ac;"></div>
<div style="left:573px;top:109px;width:1px;height:89px;background:#a0a0a0;"></div>
<div style="left:104px;top:197px;width:470px;height:1px;background:#a0a0a0;"></div>
<div style="left:108px;top:126px;width:462px;height:69px;box-sizing:border-box;border-style:solid;border-width:1px;border-color:#808080 #ececec #ececec #808080;"></div>
<span class="t" style="left:112.22px;top:144px;transform:scaleX(0.8804);transform-origin:0 0;">500.00 GB</span>
<span class="t" style="left:112.1px;top:159px;letter-spacing:-0.07px;">Unallocated</span>
<div style="left:1px;top:203px;width:100px;height:1px;background:#fff;"></div>
<div style="left:100px;top:203px;width:1px;height:97px;background:#fff;"></div>
<div style="left:103px;top:205px;width:1px;height:95px;background:#a0a0a0;"></div>
<div style="left:104px;top:204px;width:290px;height:1px;background:#fff;"></div>
<div style="left:1px;top:300px;width:394px;height:1px;background:#a0a0a0;"></div>
<div style="left:1px;top:301px;width:394px;height:1px;background:#fff;"></div>
<div style="left:394px;top:204px;width:1px;height:97px;background:#a0a0a0;"></div>
<svg style="left:11.5px;top:208px;overflow:visible" width="15" height="15" viewBox="0 0 15 15"><circle cx="9.2" cy="5.4" r="4.7" fill="#e2e2e2" stroke="#8c8c8c" stroke-width="0.9"/><circle cx="9.2" cy="5.4" r="2.6" fill="#f4f4f4" stroke="#b4b4b4" stroke-width="0.6"/><circle cx="9.2" cy="5.4" r="1.2" fill="#fff" stroke="#9a9a9a" stroke-width="0.5"/>
<path d="M0.9 8.4 H12.5 L13.2 11 H0.2 Z" fill="#cccccc"/><rect x="0.2" y="11" width="13" height="3.5" fill="#3c3c3c"/><rect x="9.6" y="11.8" width="2.2" height="1.8" fill="#38e038"/></svg>
<span class="t" style="left:28.3px;top:211px;letter-spacing:-0.243px;font-weight:bold;">CD-ROM 0</span>
<span class="t" style="left:9.42px;top:226px;transform:scaleX(0.8792);transform-origin:0 0;">DVD</span>
<span class="t" style="left:9.41px;top:241px;transform:scaleX(0.8881);transform-origin:0 0;">3.01 GB</span>
<span class="t" style="left:9.3px;top:256px;letter-spacing:0.14px;">Online</span>
<div style="left:104px;top:208px;width:286px;height:88px;background:#fff;"></div>
<div style="left:105px;top:209px;width:284px;height:13px;background:#000080;"></div>
<div style="left:389px;top:208px;width:1px;height:14px;background:#b4b4ac;"></div>
<div style="left:390px;top:208px;width:1px;height:89px;background:#a0a0a0;"></div>
<div style="left:104px;top:296px;width:287px;height:1px;background:#a0a0a0;"></div>
<div style="left:108px;top:225px;width:280px;height:69px;box-sizing:border-box;border-style:solid;border-width:1px;border-color:#808080 #ececec #ececec #808080;"></div>
<span class="t" style="left:113.1px;top:228px;transform:scaleX(0.907);transform-origin:0 0;font-weight:bold;">CCSA_X86FRE_EN-US_DV5  (Z:)</span>
<span class="t" style="left:112.22px;top:243px;transform:scaleX(0.8803);transform-origin:0 0;">3.01 GB UDF</span>
<span class="t" style="left:112.1px;top:258px;letter-spacing:0.015px;">Healthy (Primary Partition)</span>
</div>
<div style="left:197px;top:497px;width:93px;height:82px;box-sizing:border-box;border:3px solid #fb3434;"></div>
<div style="left:774px;top:392px;width:16px;height:271px;background:#f0f0f0;"></div>
<div style="left:774px;top:409px;width:15px;height:177px;background:#cdcdcd;"></div>
<svg style="left:778px;top:398.3px;overflow:visible" width="7" height="6" viewBox="0 0 7 6"><path d="M0 5.5 V3.5 L3.5 0 L7 3.5 V5.5 L3.5 2 Z" fill="#404040" stroke="#404040" stroke-width="0.45"/></svg>
<svg style="left:778px;top:652.3px;overflow:visible" width="7" height="6" viewBox="0 0 7 6"><path d="M0 0 V2 L3.5 5.5 L7 2 V0 L3.5 3.5 Z" fill="#404040" stroke="#404040" stroke-width="0.45"/></svg>
<div style="left:196px;top:663px;width:594px;height:1px;background:#fff;"></div>
<div style="left:196px;top:664px;width:594px;height:18px;background:#f0f0f0;"></div>
<div style="left:196px;top:682px;width:594px;height:1px;background:#a0a0a0;"></div>
<div style="left:789px;top:663px;width:1px;height:20px;background:#a0a0a0;"></div>
<div style="left:202px;top:667px;width:10px;height:12px;background:#000;box-shadow:0 0 0 1px #fafafa;"></div>
<div style="left:286px;top:667px;width:10px;height:12px;background:#000080;box-shadow:0 0 0 1px #fafafa;"></div>
<span class="t" style="left:217.3px;top:665px;letter-spacing:-0.09px;">Unallocated</span>
<span class="t" style="left:301.1px;top:665px;letter-spacing:0.081px;">Primary partition</span>
<div style="left:795px;top:84px;width:190px;height:601px;background:#fff;box-sizing:border-box;border-style:solid;border-width:1px;border-color:#a0a0a0 #fff #fff #a0a0a0;"></div>
<div style="left:796px;top:85px;width:188px;height:599px;box-sizing:border-box;border-style:solid;border-width:1px;border-color:#696969 #e3e3e3 #e3e3e3 #696969;"></div>
<div style="left:797px;top:86px;width:186px;height:20px;background:#f0f0f0;"></div>
<div style="left:797px;top:106px;width:186px;height:1px;background:#a0a0a0;"></div>
<span class="t" style="left:803.2px;top:89px;transform:scaleX(0.9256);transform-origin:0 0;font-weight:bold;">Actions</span>
<div style="left:797px;top:107px;width:186px;height:1px;background:#fff;"></div>
<div style="left:797px;top:108px;width:186px;height:25px;background:linear-gradient(#bcd3ec,#a4bddc);"></div>
<span class="t" style="left:804.1px;top:113px;letter-spacing:-0.107px;">Disk Management</span>
<span class="t" style="left:828.1px;top:137px;letter-spacing:0.136px;">More Actions</span>
<svg style="left:966px;top:118px" width="11" height="6" viewBox="0 0 11 6"><path d="M0.5 5.5 L5.5 0.5 L10.5 5.5 Z" fill="#000"/></svg>
<svg style="left:970px;top:140px" width="5" height="9" viewBox="0 0 5 9"><path d="M0 0 L5 4.5 L0 9 Z" fill="#000"/></svg>
<div style="left:1px;top:685px;width:984px;height:1px;background:#e4e4e4;"></div>
<div style="left:764px;top:687px;width:1px;height:20px;background:#d7d7d7;"></div>
<div style="left:982px;top:687px;width:1px;height:20px;background:#d9d9d9;"></div>
<div style="left:983px;top:686px;width:2px;height:22px;background:#fdf9f4;"></div>
<div style="left:1px;top:707px;width:984px;height:1px;background:#fdf9f4;"></div>
<div style="left:0px;top:0px;width:987px;height:1px;background:#04101f;"></div>
<div style="left:0px;top:1px;width:986px;height:1px;background:#1883d7;"></div>
<div style="left:0px;top:1px;width:1px;height:708px;background:#0a7ad6;"></div>
<div style="left:985px;top:1px;width:1px;height:708px;background:#1c8ae0;"></div>
<div style="left:986px;top:0px;width:1px;height:710px;background:#04101f;"></div>
<div style="left:0px;top:708px;width:986px;height:1px;background:#1883d7;"></div>
<div style="left:0px;top:709px;width:987px;height:1px;background:#04101f;"></div>
</body></html>
